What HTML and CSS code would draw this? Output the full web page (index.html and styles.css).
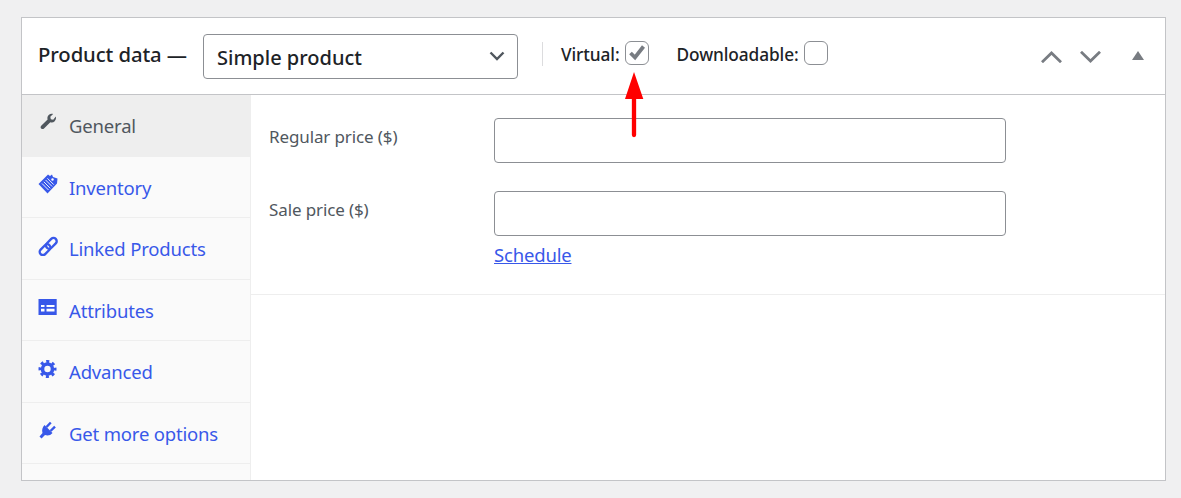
FILE: index.html
```html
<!DOCTYPE html>
<html lang="en">
<head>
<meta charset="utf-8">
<title>Product data</title>
<link rel="stylesheet" href="styles.css">
</head>
<body>
<section class="card">
  <header class="head">
    <h2 class="title">Product data —</h2>
    <div class="select"><span class="select-text">Simple product</span>
      <svg class="select-caret" viewBox="0 0 16 10" width="16" height="10"><path d="M1.500 1.500 8 8l6.500-6.500" fill="none" stroke="#50575e" stroke-width="2.400"/></svg>
    </div>
    <span class="divider"></span>
    <label class="opt">Virtual:<span class="box">
      <svg viewBox="0 0 20 20" width="20" height="20"><path d="M3.500 10 8 14.500 16.500 3.500" fill="none" stroke="#787c82" stroke-width="3.800"/></svg>
    </span></label>
    <label class="opt opt-dl">Downloadable:<span class="box"></span></label>
    <div class="controls">
      <svg viewBox="0 0 21 12" width="21" height="12"><path d="M1 11.200 10.500 2 20 11.200" fill="none" stroke="#787c82" stroke-width="2.800"/></svg>
      <svg viewBox="0 0 21 12" width="21" height="12"><path d="M1 .8 10.500 10 20 .8" fill="none" stroke="#787c82" stroke-width="2.800"/></svg>
      <svg class="ctl-tri" viewBox="0 0 12 9" width="12" height="9"><path d="M6 0 12 9H0Z" fill="#787c82"/></svg>
    </div>
  </header>
  <div class="body">
    <nav class="tabs">
      <a class="tab tab-on"><svg class="ico" viewBox="0 0 18 18" width="18" height="18"><path d="M16.800 3.600c.5 1.700.1 3.400-1.100 4.600-1.200 1.200-2.900 1.500-4.400 1L5 15.500c-.8.800-2 .8-2.800 0-.8-.8-.8-2 0-2.800L8.600 6.500c-.5-1.500-.1-3.200 1.100-4.400C10.900.9 12.500.500 14.100 1L11.300 3.800l.5 2.500 2.400.5z" fill="#50575e"/></svg>General</a>
      <a class="tab"><svg class="ico" viewBox="0 0 20 20" width="20" height="20"><path d="M.5 10 10 .5 12 2 14 .5 15 3 19.500 4.500 19 9.500 9.500 19.500z" fill="#3858e9"/><path d="M4 9.500l6.500 6.500M5.800 7.800l6.500 6.500M7.600 6l6.500 6.500M9.400 4.300l6.300 6.300" stroke="#fff" stroke-width=".9"/><circle cx="14.500" cy="5.500" r="1.200" fill="#fff"/></svg>Inventory</a>
      <a class="tab"><svg class="ico" viewBox="0 0 20 20" width="20" height="20"><g transform="rotate(-45 10.200 10.500)" fill="none" stroke="#3858e9" stroke-width="2.400"><rect x="-.5" y="7.300" width="12.500" height="6.400" rx="3.200"/><rect x="8.400" y="7.300" width="12.500" height="6.400" rx="3.200"/></g></svg>Linked Products</a>
      <a class="tab"><svg class="ico" viewBox="0 0 20 20" width="20" height="20"><path d="M.5 2h18.200v16H.5z" fill="#3858e9"/><path d="M3 8h3.500v2H3zM3 11.800h3.500v2.700H3zM8.500 8h8v2h-8zM8.500 11.800h8v2.700h-8z" fill="#fff"/></svg>Attributes</a>
      <a class="tab"><svg class="ico" viewBox="0 0 20 20" width="20" height="20"><g fill="none" stroke="#3858e9"><circle cx="9.500" cy="10" r="5" stroke-width="3.600"/><circle cx="9.500" cy="10" r="7.500" stroke-width="3" stroke-dasharray="3 2.890" stroke-dashoffset="1.500"/></g></svg>Advanced</a>
      <a class="tab"><svg class="ico" viewBox="0 0 20 20" width="20" height="20"><path d="M6.500 5 14.500 13C12.500 15.500 9.500 16 7 15L3.500 18.500 1.500 16.500 4.500 13C3.500 10 4.500 7 6.500 5Z" fill="#3858e9"/><path d="M8.500 7 12.800 2.500M12.500 11 17 6.700" stroke="#3858e9" stroke-width="2.400"/></svg>Get more options</a>
    </nav>
    <div class="panel">
      <div class="group">
        <div class="field"><label class="field-label">Regular price ($)</label><div class="field-main"><input class="input" type="text"></div></div>
        <div class="field"><label class="field-label">Sale price ($)</label><div class="field-main"><input class="input" type="text"><a class="sched" href="#">Schedule</a></div></div>
      </div>
    </div>
  </div>
  <svg class="arrow" viewBox="0 0 20 66" width="20" height="66"><path d="M9 0 18.300 27H0z" fill="#ff0000"/><path d="M9 25V63" stroke="#ff0000" stroke-width="4.300" stroke-linecap="round"/></svg>
</section>
</body>
</html>
```
FILE: styles.css
```css
* { box-sizing: border-box; }
html, body { margin: 0; height: 100%; }
body {
  background: #f0f0f1;
  padding: 17px 15px 0 21px;
  font-family: "Noto Sans", "Open Sans", sans-serif;
  color: #1d2327;
  overflow: hidden;
}
.card {
  position: relative;
  height: 464px;
  background: #fff;
  border: 1px solid #c3c4c7;
  display: flex;
  flex-direction: column;
}
.head {
  height: 77px;
  flex: none;
  border-bottom: 1px solid #c3c4c7;
  display: flex;
  align-items: center;
  padding: 0 21px 0 16px;
}
.title { margin: 0 15px 5px 0; width: 150px; flex: none; font-size: 20.300px; line-height: 28px; font-weight: 500; white-space: nowrap; letter-spacing: -0.100px; }
.select {
  width: 315px;
  height: 45px;
  flex: none;
  border: 1px solid #8c8f94;
  border-radius: 4px;
  display: flex;
  align-items: center;
  justify-content: space-between;
  padding: 0 12px 0 13px;
  font-size: 20px;
  font-weight: 500;
}
.select-text { padding-top: 2px; }
.divider { width: 1px; height: 24px; background: #dcdcde; margin: 0 18px 4px 24px; }
.opt {
  display: flex;
  align-items: flex-start;
  gap: 5px;
  height: 26px;
  font-size: 17.300px;
  line-height: 30px;
  font-weight: 500;
  margin-bottom: 6px;
  letter-spacing: -0.100px;
}
.opt-dl { margin-left: 28px; }
.box {
  width: 24px;
  height: 24px;
  border: 1px solid #8c8f94;
  border-radius: 6px;
  display: flex;
  align-items: center;
  justify-content: center;
  margin-top: 1px;
}
.controls { margin-left: auto; display: flex; align-items: center; gap: 18px; padding-top: 2px; }
.ctl-tri { margin-left: 13px; margin-bottom: 4px; }
.body { flex: 1; display: flex; min-height: 0; }
.tabs {
  width: 229px;
  flex: none;
  background: #fafafa;
  border-right: 1px solid #eee;
}
.tab {
  height: 61.500px;
  display: flex;
  align-items: center;
  padding-left: 16px;
  padding-top: 0.500px;
  font-size: 18.500px;
  color: #3858e9;
  border-bottom: 1px solid #eee;
  letter-spacing: -0.180px;
}
.tab-on { background: #eee; color: #50575e; border-bottom: 0; padding-top: 0; padding-bottom: 1px; }
.ico { width: 20px; flex: none; margin-right: 11px; margin-top: -6px; }
.panel { flex: 1; min-width: 0; }
.group { height: 200px; border-bottom: 1px solid #eee; padding-top: 23px; display: flex; flex-direction: column; gap: 28px; }
.field { display: flex; padding-left: 18px; }
.field-label { width: 225px; flex: none; font-size: 17px; color: #50575e; padding-top: 7px; letter-spacing: -0.120px; }
.field-main { display: flex; flex-direction: column; align-items: flex-start; }
.input { width: 512px; height: 45px; border: 1px solid #8c8f94; border-radius: 4px; background: #fff; margin: 0; padding: 0; display: block; }
.sched { color: #3858e9; font-size: 18.500px; text-decoration: underline; margin-top: 6px; letter-spacing: -0.180px; }
.arrow { position: absolute; left: 603px; top: 54px; }
```
